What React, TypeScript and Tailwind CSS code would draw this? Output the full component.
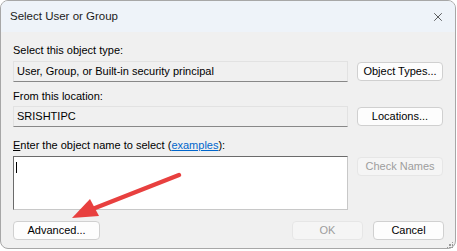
import { X } from "lucide-react";

function Btn({
  label,
  width,
  disabled,
}: {
  label: string;
  width: string;
  disabled?: boolean;
}) {
  return (
    <div
      className={`${width} h-[19px] flex items-center justify-center rounded-[4px] border text-[11px] ${
        disabled
          ? "bg-[#f5f5f5] border-[#e6e6e6] text-[#9d9d9d]"
          : "bg-[#fdfdfd] border-[#d0d0d0] text-black"
      }`}
    >
      {label}
    </div>
  );
}

function ReadonlyField({ value }: { value: string }) {
  return (
    <div className="w-[335px] h-[21px] flex items-center pl-[3px] bg-[#f0f0f0] border border-[#e2e2e2] border-b-[#888888] text-[11px] text-black">
      {value}
    </div>
  );
}

function Arrow() {
  return (
    <svg
      className="absolute left-0 top-0 pointer-events-none"
      width="457"
      height="251"
      viewBox="0 0 457 251"
    >
      <line
        x1="179"
        y1="175"
        x2="90"
        y2="210"
        stroke="#e8403f"
        strokeWidth="4.5"
        strokeLinecap="round"
      />
      <polygon points="72,218 90,199 99,216" fill="#e8403f" />
    </svg>
  );
}

export default function App() {
  return (
    <div
      className="relative w-[457px] h-[251px] bg-white overflow-hidden"
      style={{ fontFamily: '"Liberation Sans", Arial, sans-serif' }}
    >
      <div className="w-[456px] h-[249px] rounded-[8px] border border-[#a7a7a7] overflow-hidden flex flex-col bg-[#f0f0f0]">
        <div className="h-[31px] shrink-0 bg-[#eef3f9] flex items-center justify-between pl-[9px] pr-[10px]">
          <span className="text-[11.5px] text-[#1b1b1b]">Select User or Group</span>
          <X className="size-[14px] text-[#1b1b1b]" strokeWidth={1.2} />
        </div>

        <div className="flex flex-col pl-[12px] pr-[11px] pt-[10px]">
          <div className="text-[11px] leading-[16px] text-black">Select this object type:</div>
          <div className="mt-[3px] flex items-center gap-[9px]">
            <ReadonlyField value="User, Group, or Built-in security principal" />
            <Btn label="Object Types..." width="w-[86px]" />
          </div>

          <div className="mt-[6px] text-[11px] leading-[16px] text-black">From this location:</div>
          <div className="mt-[2px] flex items-center gap-[9px]">
            <ReadonlyField value="SRISHTIPC" />
            <Btn label="Locations..." width="w-[86px]" />
          </div>

          <div className="mt-[10px] text-[11px] leading-[16px] text-black">
            <span className="underline">E</span>nter the object name to select (<span className="text-[#0066cc] underline">examples</span>):
          </div>
          <div className="mt-[3px] flex items-start gap-[9px]">
            <div className="w-[335px] h-[54px] bg-white border border-[#c8c8c8] border-t-[#6b6b6b] border-l-[#6b6b6b] pl-[2px] pt-[5px]">
              <div className="w-px h-[11px] bg-black" />
            </div>
            <div className="mt-[1px]">
              <Btn label="Check Names" width="w-[86px]" disabled />
            </div>
          </div>

          <div className="mt-[11px] flex items-center">
            <Btn label="Advanced..." width="w-[87px]" />
            <div className="flex-1" />
            <Btn label="OK" width="w-[71px]" disabled />
            <div className="w-[10px]" />
            <Btn label="Cancel" width="w-[71px]" />
          </div>
        </div>
      </div>
      <div className="absolute right-[4px] bottom-[3px] grid grid-cols-3 gap-[1px]">
        <span />
        <span />
        <span className="size-[1.5px] bg-[#9a9a9a]" />
        <span />
        <span className="size-[1.5px] bg-[#9a9a9a]" />
        <span className="size-[1.5px] bg-[#9a9a9a]" />
        <span className="size-[1.5px] bg-[#9a9a9a]" />
        <span className="size-[1.5px] bg-[#9a9a9a]" />
        <span className="size-[1.5px] bg-[#9a9a9a]" />
      </div>
      <Arrow />
    </div>
  );
}
